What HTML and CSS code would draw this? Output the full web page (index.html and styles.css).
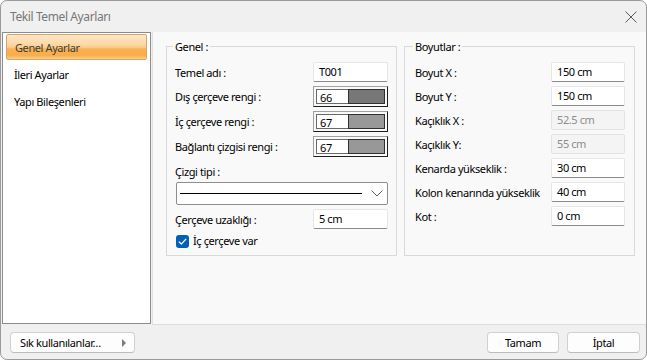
FILE: index.html
```html
<!DOCTYPE html>
<html lang="tr">
<head>
  <meta charset="UTF-8" />
  <title>Tekil Temel Ayarları</title>
  <link rel="stylesheet" href="styles.css">
</head>
<body>
  <div class="window">
    <div class="titlebar">
      <span class="title">Tekil Temel Ayarları</span>
      <svg class="close" width="12" height="12" viewBox="0 0 12 12">
        <path d="M0.5 0.5 L11.5 11.5 M11.5 0.5 L0.5 11.5" stroke="#5a5a5a" stroke-width="1" fill="none" />
      </svg>
    </div>

    <div class="main">
      <div class="sidebar">
        <div class="item selected">Genel Ayarlar</div>
        <div class="item">İleri Ayarlar</div>
        <div class="item">Yapı Bileşenleri</div>
      </div>

      <div class="content">
        <div class="group genel">
          <div class="group-title">Genel :</div>

          <div class="row first">
            <span>Temel adı :</span>
            <div class="input">T001</div>
          </div>
          <div class="row">
            <span>Dış çerçeve rengi :</span>
            <div class="color"><div class="num">66</div><div class="swatch dark"></div></div>
          </div>
          <div class="row">
            <span>İç çerçeve rengi :</span>
            <div class="color"><div class="num">67</div><div class="swatch"></div></div>
          </div>
          <div class="row">
            <span>Bağlantı çizgisi rengi :</span>
            <div class="color"><div class="num">67</div><div class="swatch"></div></div>
          </div>

          <div class="label-line">Çizgi tipi :</div>
          <div class="select">
            <div class="line"></div>
            <svg width="12" height="7" viewBox="0 0 12 7">
              <path d="M0.5 0.5 L6 6 L11.5 0.5" stroke="#5f5f5f" stroke-width="1" fill="none" />
            </svg>
          </div>

          <div class="row after-select">
            <span>Çerçeve uzaklığı :</span>
            <div class="input">5 cm</div>
          </div>

          <label class="check">
            <span class="box">
              <svg width="9" height="7" viewBox="0 0 9 7">
                <path d="M0.8 3.6 L3.3 6 L8.2 0.9" stroke="#fff" stroke-width="1.3" fill="none" />
              </svg>
            </span>
            İç çerçeve var
          </label>
        </div>

        <div class="group boyut">
          <div class="group-title">Boyutlar :</div>

          <div class="row first">
            <span>Boyut X :</span>
            <div class="input">150 cm</div>
          </div>
          <div class="row">
            <span>Boyut Y :</span>
            <div class="input">150 cm</div>
          </div>
          <div class="row">
            <span>Kaçıklık X :</span>
            <div class="input disabled">52.5 cm</div>
          </div>
          <div class="row">
            <span>Kaçıklık Y:</span>
            <div class="input disabled">55 cm</div>
          </div>
          <div class="row">
            <span>Kenarda yükseklik :</span>
            <div class="input">30 cm</div>
          </div>
          <div class="row">
            <span>Kolon kenarında yükseklik</span>
            <div class="input">40 cm</div>
          </div>
          <div class="row">
            <span>Kot :</span>
            <div class="input">0 cm</div>
          </div>
        </div>
      </div>
    </div>

    <div class="footer">
      <button class="btn fav">Sık kullanılanlar… <span class="arrow"></span></button>
      <div class="actions">
        <button class="btn ok">Tamam</button>
        <button class="btn cancel">İptal</button>
      </div>
    </div>
  </div>
</body>
</html>
```

FILE: styles.css
```css
body {
  margin: 0;
  font-family: "Noto Sans", "Open Sans", sans-serif;
  font-size: 11px;
  letter-spacing: -0.4px;
  color: #000;
}

.window {
  width: 645px;
  height: 358px;
  border: 1px solid #9a9a9a;
  border-radius: 7px;
  background: #f0f0f0;
  overflow: hidden;
  display: flex;
  flex-direction: column;
}

.titlebar {
  height: 31px;
  display: flex;
  align-items: center;
  justify-content: space-between;
  padding: 0 9px 0 9px;
}

.title {
  color: #777;
  font-size: 12px;
}

.main {
  display: flex;
  height: 293px;
}

.sidebar {
  flex: none;
  width: 141px;
  height: 288px;
  margin-left: 1px;
  padding: 1px 3px;
  background: #fff;
  border: 1px solid #8c8c8c;
}

.item {
  height: 27px;
  line-height: 27px;
  padding-left: 8px;
  color: #000;
}

.item.selected {
  height: 24px;
  line-height: 25px;
  margin-bottom: 1px;
  padding-left: 8px;
  color: #3c3c3c;
  border: 1px solid #d1a56b;
  border-radius: 2px;
  background: linear-gradient(#fee6c8 0%, #fdd7a3 40%, #fcca85 52%, #f9b152 58%, #f9ad4a 85%, #fccf8f 100%);
}

.content {
  flex: 1;
  margin-left: 1px;
  background: #f9f9f9;
  border-left: 1px solid #e1e1e1;
  border-bottom: 1px solid #dedede;
  display: flex;
  gap: 7px;
  padding: 14px 11px 0 13px;
  align-items: flex-start;
}

.group {
  flex: none;
  width: 213px;
  height: 208px;
  border: 1px solid #d9d9d9;
  padding: 0 8px;
}

.group.boyut {
  width: 210px;
  padding: 0 9px 0 10px;
}

.group-title {
  width: fit-content;
  margin: -8px 0 0 -2px;
  padding: 0 2px;
  line-height: 16px;
  background: #f9f9f9;
}

.row {
  display: flex;
  align-items: center;
  justify-content: space-between;
  margin-top: 4px;
}

.row.first {
  margin-top: 7px;
}

.input {
  box-sizing: border-box;
  width: 75px;
  height: 20px;
  line-height: 18px;
  padding-left: 5px;
  background: #fff;
  border: 1px solid #e6e6e6;
  border-bottom-color: #8a8a8a;
  border-radius: 2px;
}

.boyut .input {
  width: 74px;
}

.input.disabled {
  background: #f4f4f4;
  border-color: #e3e3e3;
  color: #8c8c8c;
}

.color {
  box-sizing: border-box;
  width: 75px;
  height: 21px;
  display: flex;
  padding: 2px;
  border: 1px solid;
  border-color: #a0a0a0 #1e1e1e #1e1e1e #a0a0a0;
}

.num {
  width: 28px;
  line-height: 15px;
  padding-left: 3px;
  background: #fff;
  border: 1px solid #696969;
  border-right: none;
}

.swatch {
  flex: 1;
  background: #989898;
  border: 1px solid #303030;
}

.swatch.dark {
  background: #777;
}

.label-line {
  margin-top: 7px;
  line-height: 16px;
}

.select {
  box-sizing: border-box;
  height: 23px;
  margin: 2px 0 0 1px;
  display: flex;
  align-items: center;
  padding: 0 3px;
  gap: 9px;
  background: #fff;
  border: 1px solid #8d8d8d;
  border-radius: 2px;
}

.line {
  flex: 1;
  height: 1px;
  border-top: 1px solid #000;
}

.select svg {
  margin-right: 1px;
}

.check {
  display: flex;
  align-items: center;
  gap: 4px;
  margin: 4px 0 0 1px;
  line-height: 16px;
}

.box {
  width: 13px;
  height: 13px;
  border-radius: 3px;
  background: #005fb8;
  display: flex;
  align-items: center;
  justify-content: center;
}

.footer {
  flex: 1;
  display: flex;
  justify-content: space-between;
  align-items: flex-start;
  padding: 7px 6px 0 9px;
}

.actions {
  display: flex;
  gap: 8px;
}

.btn {
  box-sizing: border-box;
  height: 21px;
  font-family: inherit;
  font-size: 11px;
  letter-spacing: inherit;
  color: #000;
  background: #fdfdfd;
  border: 1px solid #d0d0d0;
  border-bottom-color: #bcbcbc;
  border-radius: 4px;
  padding: 0;
}

.btn.fav {
  width: 125px;
  display: flex;
  align-items: center;
  justify-content: space-between;
  padding: 0 8px 0 9px;
}

.arrow {
  width: 0;
  height: 0;
  border-left: 4px solid #7a7a7a;
  border-top: 4px solid transparent;
  border-bottom: 4px solid transparent;
}

.btn.ok {
  width: 72px;
}

.btn.cancel {
  width: 73px;
}
```
